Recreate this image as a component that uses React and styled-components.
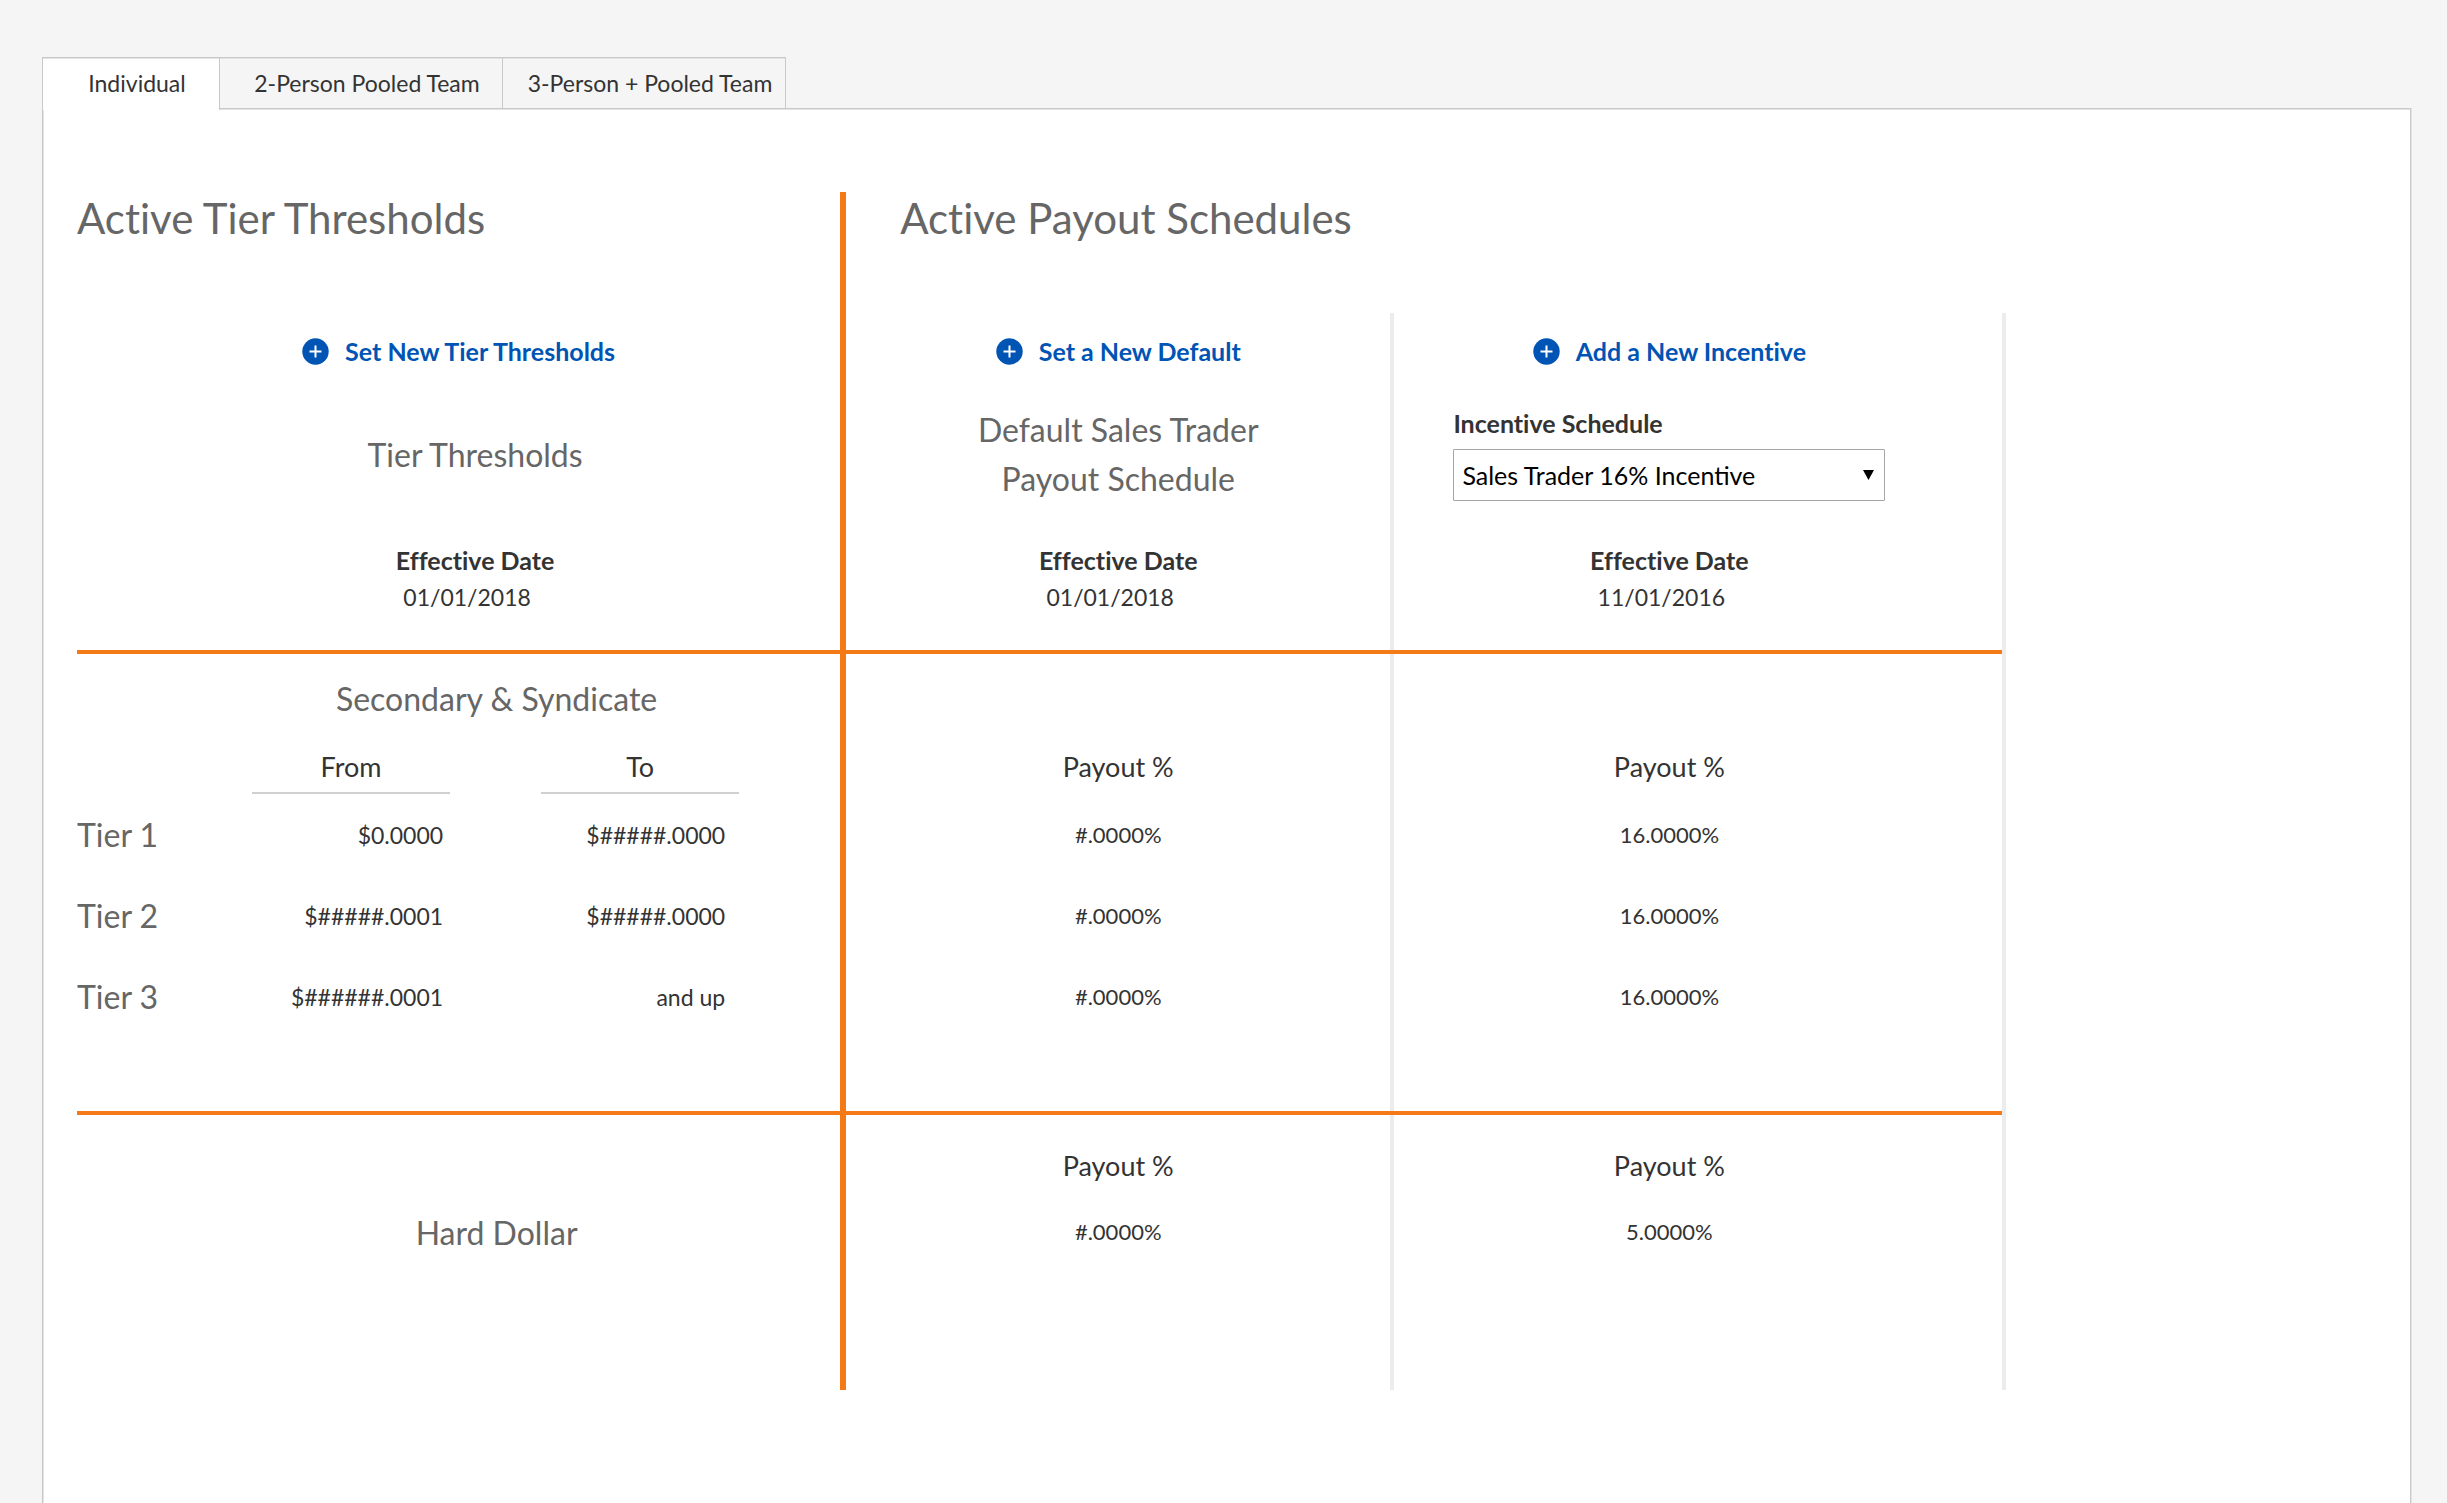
import React, { useState } from "react";
import styled, { createGlobalStyle } from "styled-components";

const color = {
  page: "#f5f5f5",
  line: "#c9c9c9",
  lineSoft: "#e3e3e3",
  divider: "#ececec",
  accent: "#f47a18",
  link: "#0054b4",
  heading: "#666666",
  text: "#333333",
};

const GlobalStyle = createGlobalStyle`
  *, *::before, *::after { box-sizing: border-box; }
  body {
    margin: 0;
    background: ${color.page};
    color: ${color.text};
    font-family: Lato, "Trebuchet MS", sans-serif;
    font-variant-ligatures: none;
  }
`;

const Page = styled.main`
  display: flex;
  flex-direction: column;
  min-height: 100vh;
  padding: 57px 36px 0 42px;
`;

const TabList = styled.div`
  display: flex;
  height: 51px;
`;

const Tab = styled.button`
  z-index: 1;
  width: ${({ $wide }) => ($wide ? 283 : 178)}px;
  margin: 0 0 ${({ $active }) => ($active ? -2 : 0)}px;
  padding: 0 0 ${({ $active }) => ($active ? 2 : 0)}px 12px;
  border: 0 solid ${color.line};
  border-width: 1px 1px 0 0;
  box-shadow: inset 0 1px 0 ${color.lineSoft};
  background: ${({ $active }) => ($active ? "#ffffff" : color.page)};
  color: ${color.text};
  font: 23px Lato, "Trebuchet MS", sans-serif;
  white-space: nowrap;
  cursor: pointer;

  &:first-child {
    border-left-width: 1px;
  }
`;

const Panel = styled.section`
  flex: 1;
  padding: 83px 36px 80px 34px;
  border: 1px solid ${color.line};
  border-bottom: 0;
  box-shadow: inset 1px 1px 0 ${color.lineSoft}, 1px 0 0 ${color.lineSoft};
  background: #ffffff;
`;

const Board = styled.table`
  width: 84%;
  min-width: 1400px;
  table-layout: fixed;
  border-collapse: separate;
  border-spacing: 0;
`;

const Col = styled.col`
  width: ${({ $w }) => $w}px;
`;

const Row = styled.tr`
  height: ${({ $h }) => $h}px;
`;

const Rule = styled.td`
  height: 4px;
  padding: 0;
  border-right: ${({ $end }) => ($end ? `4px solid ${color.divider}` : 0)};
  background: ${color.accent};
  background-clip: padding-box;
`;

const Cell = styled.td`
  padding: 0;
  vertical-align: ${({ $top }) => ($top ? "top" : "middle")};
  text-align: ${({ $align }) => $align || "center"};
  font-weight: 400;
`;

const LeftCell = styled(Cell)`
  padding-left: ${({ $indent }) => $indent || 0}px;
  border-right: 6px solid ${color.accent};
`;

const DefaultCell = styled(Cell)`
  border-right: 4px solid ${color.divider};
`;

const IncentiveCell = styled(Cell)`
  padding-right: 58px;
  border-right: 4px solid ${color.divider};
`;

const PayoutTitleCell = styled(Cell)`
  padding-left: 54px;
`;

const FromCell = styled(Cell)`
  padding-right: ${({ $value }) => ($value ? 98 : 91)}px;
`;

const ToCell = styled(LeftCell)`
  padding-right: ${({ $value }) => ($value ? 115 : 101)}px;
`;

const Title = styled.h1`
  margin: 0;
  color: ${color.heading};
  font-size: 42px;
  font-weight: 400;
  line-height: 52px;
`;

const Subtitle = styled.div`
  color: ${color.heading};
  font-size: 32px;
  line-height: 49px;
`;

const ActionLink = styled.a`
  display: inline-flex;
  align-items: center;
  gap: 16px;
  color: ${color.link};
  font-size: 25px;
  font-weight: 700;
  line-height: 32px;
  text-decoration: none;
  vertical-align: middle;
`;

const EffectiveLabel = styled.div`
  padding-top: 23px;
  font-size: 25px;
  font-weight: 700;
  line-height: 37px;
`;

const EffectiveDay = styled.div`
  padding-right: 16px;
  font-size: 23px;
  line-height: 37px;
`;

const ColumnName = styled.div`
  height: 52px;
  border-bottom: 2px solid ${({ $lined }) => ($lined ? "#d0d0d0" : "transparent")};
  font-size: 27px;
  line-height: 50px;
`;

const Value = styled.span`
  font-size: ${({ $percent }) => ($percent ? 22 : 23)}px;
  line-height: 32px;
`;

const Field = styled.div`
  display: inline-flex;
  flex-direction: column;
  gap: 10px;
  width: 432px;
  text-align: left;
  vertical-align: middle;
`;

const FieldLabel = styled.label`
  font-size: 25px;
  font-weight: 700;
  line-height: 32px;
`;

const SelectBox = styled.div`
  position: relative;
  height: 52px;
`;

const Select = styled.select`
  width: 100%;
  height: 100%;
  padding: 0 32px 0 8px;
  border: 1px solid #a6a6a6;
  border-radius: 1px;
  appearance: none;
  background: #ffffff;
  color: #000000;
  font: 25px Lato, "Trebuchet MS", sans-serif;
`;

const Arrow = styled.svg`
  position: absolute;
  top: 21px;
  right: 11px;
  pointer-events: none;
`;

function PlusIcon() {
  return (
    <svg width="27" height="27" viewBox="0 0 27 27" aria-hidden="true">
      <circle cx="13.5" cy="13.5" r="13.2" fill={color.link} />
      <path d="M13.5 7.5v12M7.5 13.5h12" stroke="#fff" strokeWidth="2" />
    </svg>
  );
}

function Action({ children }) {
  return (
    <ActionLink href="#">
      <PlusIcon />
      {children}
    </ActionLink>
  );
}

function Effective({ day }) {
  return (
    <>
      <EffectiveLabel>Effective Date</EffectiveLabel>
      <EffectiveDay>{day}</EffectiveDay>
    </>
  );
}

function BlankRow({ height }) {
  return (
    <Row $h={height}>
      <LeftCell colSpan={3} />
      <DefaultCell />
      <IncentiveCell />
    </Row>
  );
}

function RuleRow() {
  return (
    <tr aria-hidden="true">
      <Rule colSpan={4} />
      <Rule $end />
    </tr>
  );
}

const tabs = ["Individual", "2-Person Pooled Team", "3-Person + Pooled Team"];

const tiers = [
  { name: "Tier 1", from: "$0.0000", to: "$#####.0000", base: "#.0000%", incentive: "16.0000%" },
  { name: "Tier 2", from: "$#####.0001", to: "$#####.0000", base: "#.0000%", incentive: "16.0000%" },
  { name: "Tier 3", from: "$######.0001", to: "and up", base: "#.0000%", incentive: "16.0000%" },
];

export default function App() {
  const [active, setActive] = useState(0);

  return (
    <>
      <GlobalStyle />
      <Page>
        <TabList role="tablist">
          {tabs.map((name, i) => (
            <Tab
              key={name}
              type="button"
              role="tab"
              aria-selected={i === active}
              $active={i === active}
              $wide={i > 0}
              onClick={() => setActive(i)}
            >
              {name}
            </Tab>
          ))}
        </TabList>
        <Panel role="tabpanel">
          <Board>
            <colgroup>
              <Col $w={175} />
              <Col $w={289} />
              <Col $w={305} />
              <Col $w={548} />
              <Col $w={612} />
            </colgroup>
            <tbody>
              <Row $h={121}>
                <LeftCell colSpan={3} $align="left" $top>
                  <Title>Active Tier Thresholds</Title>
                </LeftCell>
                <PayoutTitleCell colSpan={2} $align="left" $top>
                  <Title>Active Payout Schedules</Title>
                </PayoutTitleCell>
              </Row>
              <Row $h={76}>
                <LeftCell colSpan={3}>
                  <Action>Set New Tier Thresholds</Action>
                </LeftCell>
                <DefaultCell>
                  <Action>Set a New Default</Action>
                </DefaultCell>
                <IncentiveCell>
                  <Action>Add a New Incentive</Action>
                </IncentiveCell>
              </Row>
              <Row $h={130}>
                <LeftCell colSpan={3} $indent={33}>
                  <Subtitle>Tier Thresholds</Subtitle>
                </LeftCell>
                <DefaultCell>
                  <Subtitle>
                    Default Sales Trader
                    <br />
                    Payout Schedule
                  </Subtitle>
                </DefaultCell>
                <IncentiveCell>
                  <Field>
                    <FieldLabel htmlFor="incentive">Incentive Schedule</FieldLabel>
                    <SelectBox>
                      <Select id="incentive">
                        <option>Sales Trader 16% Incentive</option>
                      </Select>
                      <Arrow width="11" height="10" viewBox="0 0 11 10" aria-hidden="true">
                        <path d="M0 0h11L5.5 10z" />
                      </Arrow>
                    </SelectBox>
                  </Field>
                </IncentiveCell>
              </Row>
              <Row $h={131}>
                <LeftCell colSpan={3} $indent={33} $top>
                  <Effective day="01/01/2018" />
                </LeftCell>
                <DefaultCell $top>
                  <Effective day="01/01/2018" />
                </DefaultCell>
                <IncentiveCell $top>
                  <Effective day="11/01/2016" />
                </IncentiveCell>
              </Row>
              <RuleRow />
              <Row $h={88}>
                <LeftCell colSpan={3} $indent={76}>
                  <Subtitle>Secondary &amp; Syndicate</Subtitle>
                </LeftCell>
                <DefaultCell />
                <IncentiveCell />
              </Row>
              <Row $h={52}>
                <Cell />
                <FromCell as="th" scope="col">
                  <ColumnName $lined>From</ColumnName>
                </FromCell>
                <ToCell as="th" scope="col">
                  <ColumnName $lined>To</ColumnName>
                </ToCell>
                <DefaultCell as="th" scope="col">
                  <ColumnName>Payout %</ColumnName>
                </DefaultCell>
                <IncentiveCell as="th" scope="col">
                  <ColumnName>Payout %</ColumnName>
                </IncentiveCell>
              </Row>
              {tiers.map((tier) => (
                <Row key={tier.name} $h={81}>
                  <Cell as="th" scope="row" $align="left">
                    <Subtitle>{tier.name}</Subtitle>
                  </Cell>
                  <FromCell $value $align="right">
                    <Value>{tier.from}</Value>
                  </FromCell>
                  <ToCell $value $align="right">
                    <Value>{tier.to}</Value>
                  </ToCell>
                  <DefaultCell>
                    <Value $percent>{tier.base}</Value>
                  </DefaultCell>
                  <IncentiveCell>
                    <Value $percent>{tier.incentive}</Value>
                  </IncentiveCell>
                </Row>
              ))}
              <BlankRow height={74} />
              <RuleRow />
              <BlankRow height={26} />
              <Row $h={52}>
                <LeftCell colSpan={3} />
                <DefaultCell as="th" scope="col">
                  <ColumnName>Payout %</ColumnName>
                </DefaultCell>
                <IncentiveCell as="th" scope="col">
                  <ColumnName>Payout %</ColumnName>
                </IncentiveCell>
              </Row>
              <Row $h={78}>
                <LeftCell as="th" scope="row" colSpan={3} $indent={76}>
                  <Subtitle>Hard Dollar</Subtitle>
                </LeftCell>
                <DefaultCell>
                  <Value $percent>#.0000%</Value>
                </DefaultCell>
                <IncentiveCell>
                  <Value $percent>5.0000%</Value>
                </IncentiveCell>
              </Row>
              <BlankRow height={119} />
            </tbody>
          </Board>
        </Panel>
      </Page>
    </>
  );
}
